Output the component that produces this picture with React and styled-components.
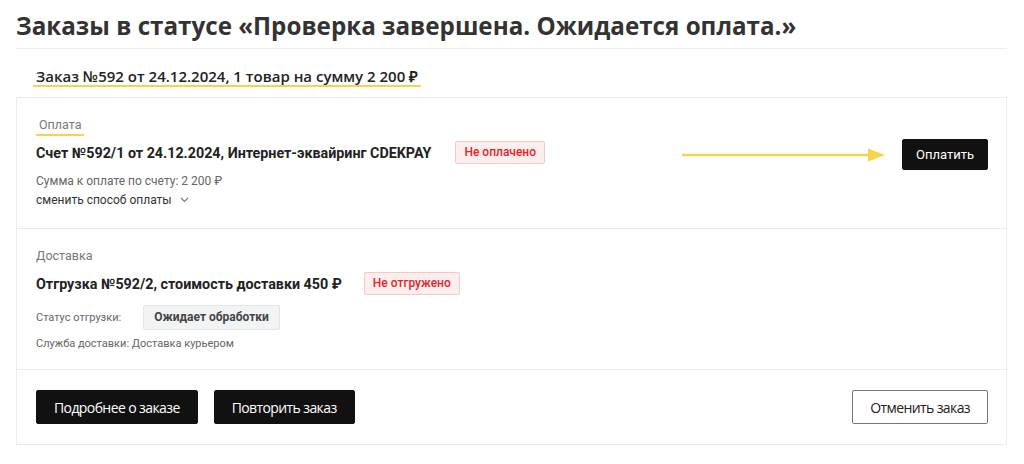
import React from 'react';
import styled, { createGlobalStyle } from 'styled-components';

const GlobalStyle = createGlobalStyle`
    body {
        margin: 0;
        background: #fff;
        font-family: Roboto, "Liberation Sans", Arial, sans-serif;
        color: #222;
    }
`;

const Page = styled.main`
    padding: 11px 17px 20px 16px;
`;

const Title = styled.h1`
    margin: 0;
    padding-bottom: 7px;
    font-family: "Open Sans", sans-serif;
    font-size: 24.2px;
    font-weight: 700;
    line-height: 30px;
    color: #333;
    border-bottom: 1px solid #ededed;
`;

const OrderHead = styled.div`
    padding: 18px 0 10px 17px;
`;

const Underlined = styled.span`
    display: inline-block;
    padding: 0 3px;
    border-bottom: 2px solid #f6d34b;
    border-radius: 1px;
    font-family: ${p => p.serif ? '"Open Sans", sans-serif' : 'inherit'};
    font-size: ${p => p.size}px;
    font-weight: ${p => p.weight};
    line-height: ${p => p.lh}px;
    color: ${p => p.color};
`;

const Card = styled.section`
    border: 1px solid #ececec;
`;

const Section = styled.div`
    display: flex;
    align-items: flex-start;
    justify-content: space-between;
    padding: ${p => p.pad};
    border-bottom: 1px solid #ececec;
`;

const Column = styled.div`
    display: flex;
    flex-direction: column;
`;

const Label = styled.div`
    font-size: 12.5px;
    color: #777;
    line-height: 18px;
    margin-bottom: 7px;
`;

const Row = styled.div`
    display: flex;
    align-items: center;
    gap: ${p => p.gap}px;
    margin-bottom: ${p => p.mb}px;
`;

const Bold = styled.div`
    font-size: 14.3px;
    font-weight: 700;
    color: #222;
    line-height: 18px;
`;

const Badge = styled.span`
    display: inline-block;
    box-sizing: border-box;
    height: ${p => p.h || 23}px;
    line-height: ${p => (p.h || 23) - 2}px;
    padding: 0 ${p => p.px || 8}px;
    border: 1px solid ${p => p.gray ? '#e3e4e6' : '#f6c7ca'};
    background: ${p => p.gray ? '#f2f3f5' : '#fdeeee'};
    color: ${p => p.gray ? '#444' : '#e2232a'};
    font-size: 12px;
    font-weight: ${p => p.gray ? 700 : 500};
    border-radius: 2px;
`;

const Small = styled.div`
    font-size: ${p => p.size || 12}px;
    line-height: 18px;
    margin-bottom: ${p => p.mb || 0}px;
    color: ${p => p.dark ? '#333' : '#666'};
    display: flex;
    align-items: center;
    gap: 8px;
`;

const Aside = styled.div`
    display: flex;
    align-items: center;
    gap: 16px;
    margin-top: 23px;
`;

const Button = styled.button`
    box-sizing: border-box;
    height: ${p => p.h}px;
    padding: 0 ${p => p.px}px;
    background: ${p => p.outline ? '#fff' : '#111'};
    color: ${p => p.outline ? '#222' : '#fff'};
    border: 1px solid ${p => p.outline ? '#777' : '#111'};
    border-radius: 2px;
    font-family: ${p => p.condensed ? '"Open Sans", sans-serif' : 'Roboto, sans-serif'};
    font-size: ${p => p.condensed ? 14 : 13}px;
    letter-spacing: ${p => p.condensed ? '-0.6px' : '0'};
    cursor: pointer;
`;

const Footer = styled.div`
    display: flex;
    align-items: center;
    justify-content: space-between;
    padding: 20px 18px 20px 19px;
`;

const Group = styled.div`
    display: flex;
    gap: 16px;
`;

const Arrow = () => (
    <svg width="204" height="14" viewBox="0 0 204 14">
        <line x1="0" y1="7" x2="188" y2="7" stroke="#f6d34b" strokeWidth="2.5" strokeLinecap="round" />
        <path d="M186 0.5 L203 7 L186 13.5 Z" fill="#f6d34b" />
    </svg>
);

const Chevron = () => (
    <svg width="9" height="6" viewBox="0 0 9 6">
        <path d="M1 1 L4.5 4.5 L8 1" fill="none" stroke="#777" strokeWidth="1.1" />
    </svg>
);

const App = () => {
    return (
        <Page>
            <GlobalStyle />
            <Title>Заказы в статусе «Проверка завершена. Ожидается оплата.»</Title>
            <OrderHead>
                <Underlined serif size={15} weight={600} lh={18} color="#222">
                    Заказ №592 от 24.12.2024, 1 товар на сумму 2 200 ₽
                </Underlined>
            </OrderHead>
            <Card>
                <Section pad="18px 18px 19px 19px">
                    <Column>
                        <Row mb={5}>
                            <Underlined size={12.5} weight={400} lh={18} color="#777">Оплата</Underlined>
                        </Row>
                        <Row gap={24} mb={8}>
                            <Bold>Счет №592/1 от 24.12.2024, Интернет-эквайринг CDEKPAY</Bold>
                            <Badge>Не оплачено</Badge>
                        </Row>
                        <Small mb={1}>Сумма к оплате по счету: 2 200 ₽</Small>
                        <Small dark>сменить способ оплаты <Chevron /></Small>
                    </Column>
                    <Aside>
                        <Arrow />
                        <Button h={31} px={13}>Оплатить</Button>
                    </Aside>
                </Section>
                <Section pad="18px 18px 16px 19px">
                    <Column>
                        <Label>Доставка</Label>
                        <Row gap={22} mb={10}>
                            <Bold>Отгрузка №592/2, стоимость доставки 450 ₽</Bold>
                            <Badge>Не отгружено</Badge>
                        </Row>
                        <Row gap={22} mb={5}>
                            <Small size={11}>Статус отгрузки:</Small>
                            <Badge gray h={25} px={10}>Ожидает обработки</Badge>
                        </Row>
                        <Small size={11}>Служба доставки: Доставка курьером</Small>
                    </Column>
                </Section>
                <Footer>
                    <Group>
                        <Button condensed h={34} px={17}>Подробнее о заказе</Button>
                        <Button condensed h={34} px={17}>Повторить заказ</Button>
                    </Group>
                    <Button condensed outline h={34} px={17}>Отменить заказ</Button>
                </Footer>
            </Card>
        </Page>
    );
};

export default App;
